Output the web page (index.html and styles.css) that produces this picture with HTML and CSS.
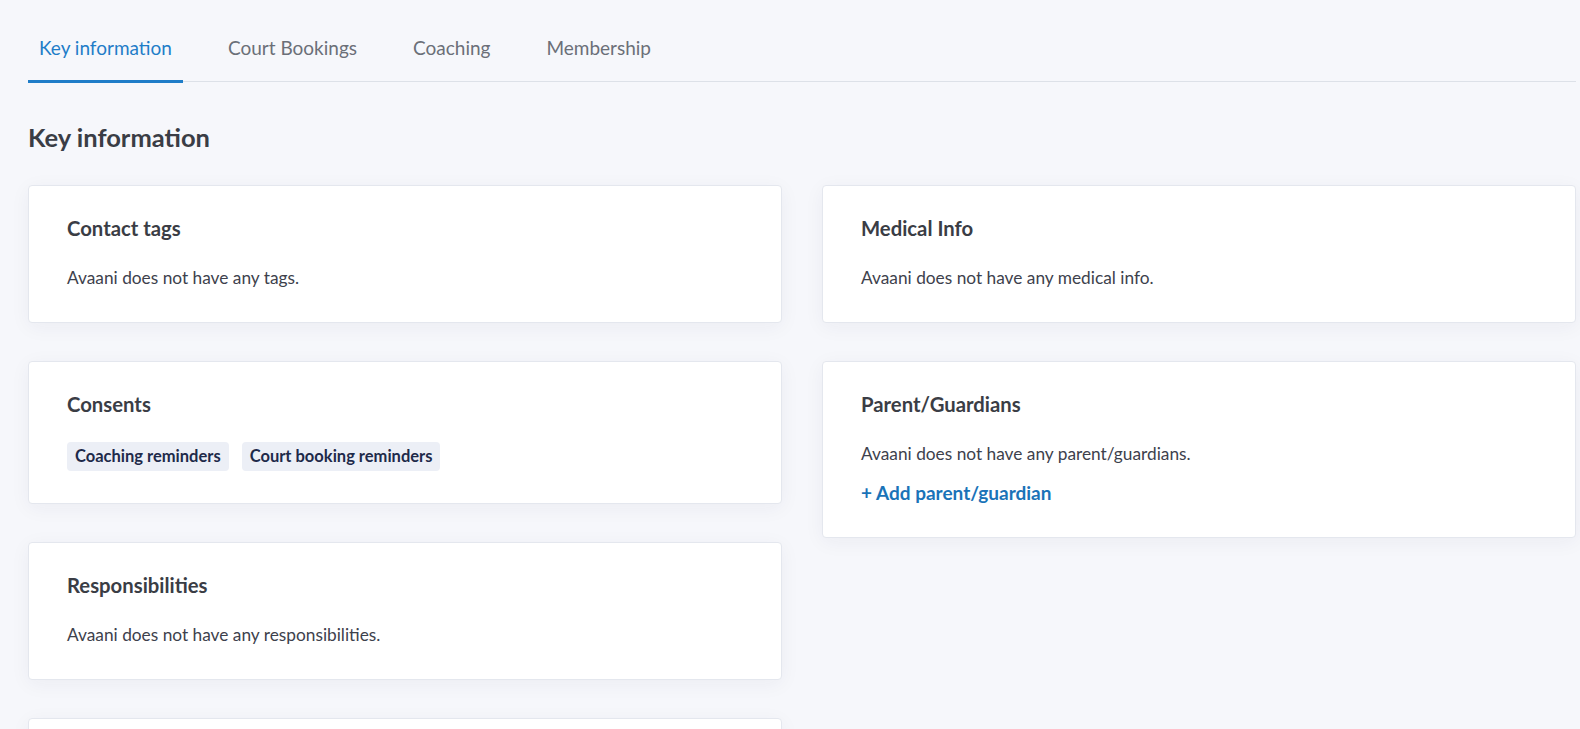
FILE: index.html
```html
<!DOCTYPE html>
<html lang="en">
<head>
    <meta charset="UTF-8" />
    <meta name="viewport" content="width=device-width, initial-scale=1.0" />
    <title>Contact - Key information</title>
    <link rel="stylesheet" href="styles.css">
</head>
<body>
    <div class="page">
        <nav class="tabs">
            <a class="tab active" href="#">Key information</a>
            <a class="tab" href="#">Court Bookings</a>
            <a class="tab" href="#">Coaching</a>
            <a class="tab" href="#">Membership</a>
        </nav>

        <h2 class="page-title">Key information</h2>

        <div class="columns">
            <div class="column">
                <div class="card">
                    <h3>Contact tags</h3>
                    <p>Avaani does not have any tags.</p>
                </div>
                <div class="card">
                    <h3>Consents</h3>
                    <div class="chips">
                        <span class="chip">Coaching reminders</span>
                        <span class="chip">Court booking reminders</span>
                    </div>
                </div>
                <div class="card">
                    <h3>Responsibilities</h3>
                    <p>Avaani does not have any responsibilities.</p>
                </div>
                <!-- next card starts below the fold -->
                <div class="card card-empty"></div>
            </div>
            <div class="column">
                <div class="card">
                    <h3>Medical Info</h3>
                    <p>Avaani does not have any medical info.</p>
                </div>
                <div class="card">
                    <h3>Parent/Guardians</h3>
                    <p>Avaani does not have any parent/guardians.</p>
                    <a class="add-link" href="#">+ Add parent/guardian</a>
                </div>
            </div>
        </div>
    </div>
</body>
</html>
```

FILE: styles.css
```css
/* Global Styles */
html, body {
    overflow: hidden;
}

body {
    font-family: Lato, 'Open Sans', sans-serif;
    background-color: #f6f7fb;
    color: #3d414c;
    margin: 0;
}

.page {
    padding: 21px 4px 0 28px;
}

/* Tabs */
.tabs {
    display: flex;
    gap: 34px;
    border-bottom: 1px solid #dde1e8;
}

.tab {
    font-size: 19px;
    line-height: 24px;
    color: #6b6f78;
    text-decoration: none;
    padding: 15px 11px 20px;
    border-bottom: 3px solid transparent;
    margin-bottom: -2px;
}

.tab.active {
    color: #1f7dc8;
    border-bottom-color: #1f7dc8;
}

.page-title {
    font-size: 25.5px;
    line-height: 32px;
    font-weight: 700;
    color: #3a3d45;
    margin: 39px 0 32px;
}

/* Cards */
.columns {
    display: grid;
    grid-template-columns: 1fr 1fr;
    column-gap: 40px;
    align-items: start;
}

.column {
    display: flex;
    flex-direction: column;
    gap: 38px;
}

.card {
    background-color: #fff;
    border: 1px solid #e4e7ee;
    border-radius: 4px;
    box-shadow: 0 4px 20px rgba(30, 40, 80, 0.05);
    padding: 28px 38px 32px;
}

.card-empty {
    min-height: 120px;
}

.card h3 {
    font-size: 20.3px;
    line-height: 28px;
    font-weight: 700;
    color: #3a3d45;
    margin: 0 0 24px;
}

.card p {
    font-size: 17.3px;
    line-height: 24px;
    margin: 0;
}

.chips {
    display: flex;
    gap: 13px;
}

.chip {
    background-color: #eceff6;
    color: #1e2a4a;
    font-size: 16.5px;
    font-weight: 700;
    line-height: 29px;
    padding: 0 8px;
    border-radius: 4px;
}

.add-link {
    display: block;
    margin-top: 15px;
    font-size: 19px;
    line-height: 24px;
    font-weight: 700;
    color: #1a73b8;
    text-decoration: none;
}
```
